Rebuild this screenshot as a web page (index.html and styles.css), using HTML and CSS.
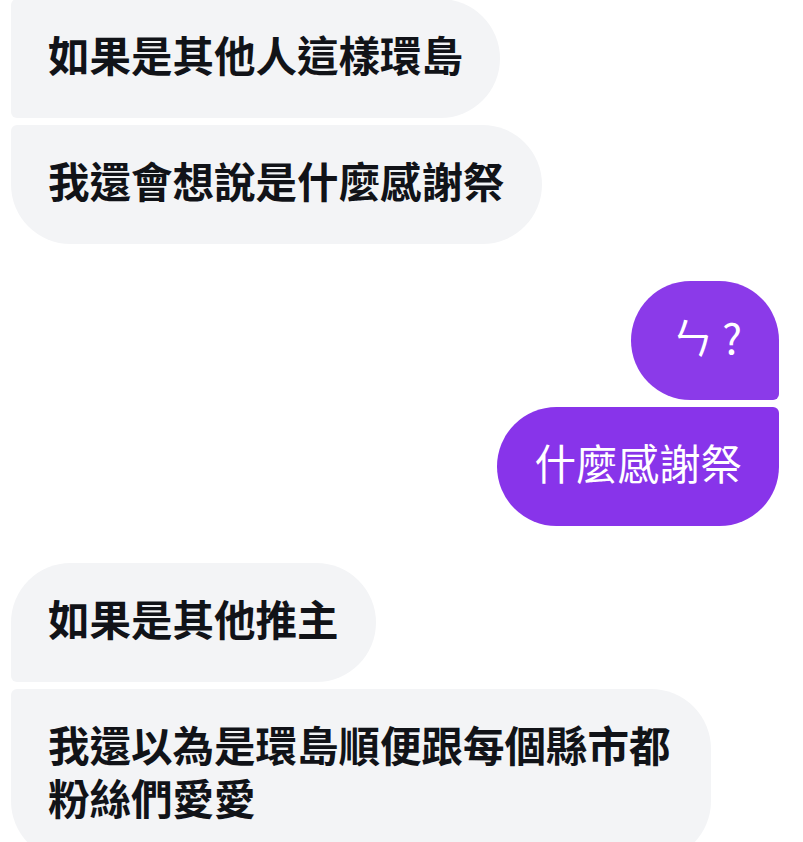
FILE: index.html
```html
<!DOCTYPE html>
<html lang="zh-Hant">
<head>
    <meta charset="UTF-8">
    <meta name="viewport" content="width=device-width, initial-scale=1.0">
    <link rel="stylesheet" href="styles.css">
</head>
<body>
    <div class="chat">
        <div class="group them">
            <div class="bubble mid">如果是其他人這樣環島</div>
            <div class="bubble last">我還會想說是什麼感謝祭</div>
        </div>
        <div class="group me">
            <div class="bubble first top">ㄣ ?</div>
            <div class="bubble last">什麼感謝祭</div>
        </div>
        <div class="group them">
            <div class="bubble first">如果是其他推主</div>
            <div class="bubble last">我還以為是環島順便跟每個縣市都粉絲們愛愛</div>
        </div>
    </div>
</body>
</html>
```

FILE: styles.css
```css
body {
    margin: 0;
    padding: 0;
    background-color: #ffffff;
    font-family: "Noto Sans CJK TC", "Noto Sans", sans-serif;
}

.chat {
    display: flex;
    flex-direction: column;
    gap: 37px;
    margin-top: -1px;
    padding: 0 24px 0 11px;
}

.group {
    display: flex;
    flex-direction: column;
    gap: 7px;
}

.group.them {
    align-items: flex-start;
}

.group.me {
    align-items: flex-end;
}

.bubble {
    box-sizing: border-box;
    max-width: 700px;
    padding: 29px 37px 37px;
    font-size: 41.5px;
    line-height: 53px;
    border-radius: 60px;
}

.them .bubble {
    background-color: #f3f4f6;
    color: #111318;
    font-weight: 700;
}

.me .bubble {
    background-color: #8834ea;
    color: #ffffff;
    font-weight: 400;
}

.me .bubble.top {
    padding-left: 41px;
    background-color: #8b3ae9;
}

/* corner shapes inside a group */
.them .mid {
    border-top-left-radius: 6px;
    border-bottom-left-radius: 6px;
}

.them .first {
    border-bottom-left-radius: 6px;
}

.them .last {
    border-top-left-radius: 6px;
}

.me .first {
    border-bottom-right-radius: 6px;
}

.me .last {
    border-top-right-radius: 6px;
}
```
